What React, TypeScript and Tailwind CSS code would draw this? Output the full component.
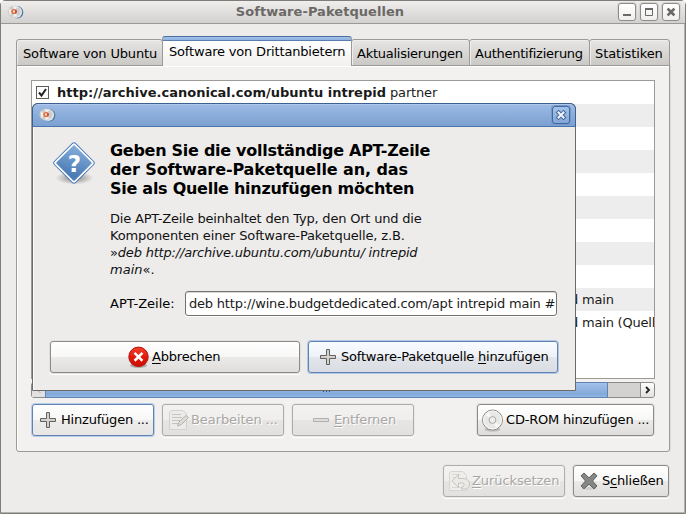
import React from "react";

type ButtonProps = {
  children: React.ReactNode;
  icon?: React.ReactNode;
  className?: string;
  tone?: "normal" | "default" | "focused" | "disabled";
};

const TONES = {
  normal:
    "border-[#8d8b87] bg-[linear-gradient(#ffffff,#f7f7f6_49%,#ebeae8_51%,#dfdedc)] text-black shadow-[0_0_0_1px_#e2e0de,0_1px_0_1px_#ffffff]",
  default:
    "border-[#5f83b3] bg-[linear-gradient(#ffffff,#f7f7f6_49%,#eeedec_51%,#e7e6e4)] text-black shadow-[0_0_0_1px_#b9cce6]",
  focused:
    "border-[#5f83b3] bg-[linear-gradient(#f8fbff,#eef1f6_49%,#e2e5ea_51%,#d9dde3)] text-black shadow-[0_0_0_1px_#b0c6e2]",
  disabled:
    "border-[#aeaca9] bg-[linear-gradient(#f3f2f1,#efeeed_49%,#e6e5e3_51%,#e2e1df)] text-[#a9a7a4] [text-shadow:1px_1px_0_#fff] shadow-[0_0_0_1px_#e9e8e6,0_1px_0_1px_#ffffff]",
};

function Button({ children, icon, className = "", tone = "normal" }: ButtonProps) {
  return (
    <button
      className={`flex h-8 shrink-0 items-center rounded-[3px] border tracking-[-0.2px] whitespace-pre ${TONES[tone]} ${className}`}
    >
      {icon}
      <span className="leading-4">{children}</span>
    </button>
  );
}

function Key({ children }: { children: React.ReactNode }) {
  return <span className="underline decoration-1 underline-offset-2">{children}</span>;
}

function PlusIcon() {
  return (
    <svg width="18" height="18" viewBox="0 0 18 18" className="shrink-0">
      <path
        d="M7.5 1.5h3v6h6v3h-6v6h-3v-6h-6v-3h6z"
        fill="#c9c8c4"
        stroke="#63615d"
      />
      <path d="M9 2.5v13M2.5 9h13" stroke="#dddcd9" />
    </svg>
  );
}

function MinusIcon() {
  return (
    <svg width="18" height="18" viewBox="0 0 18 18" className="shrink-0">
      <path d="M1.5 7.5h15v3h-15z" fill="#dddcda" stroke="#b1b0ad" />
    </svg>
  );
}

function EditIcon() {
  return (
    <svg width="22" height="22" viewBox="0 0 22 22" className="shrink-0" fill="none">
      <path d="M3 1.5h12l3.500 3.500v15.500H1.500V3z" fill="#ecebea" stroke="#d2d1ce" />
      <path d="M4 5.500h9M4 8.500h10M4 11.500h8M4 14.500h6" stroke="#c4c3c0" />
      <path d="m9.500 17 1.500-4 7-6.500 2.500 2-7 7z" fill="#dddcd8" stroke="#b4b3af" />
    </svg>
  );
}

function RevertIcon() {
  return (
    <svg width="24" height="24" viewBox="0 0 24 24" className="shrink-0" fill="none">
      <path d="M4 2.500h12l3.500 4v15h-17V4z" fill="#eeedeb" stroke="#d6d5d2" />
      <path d="M5 5.500h8M5 8.500h3M5 18.500h10" stroke="#d9d8d5" />
      <path
        d="m5 12 6.500-6.500v4h5c3.500 0 6 2.500 6 5.500s-2 5-5 5h-3v-2h1.500c1.500-1 1.500-3.500 0-4h-4.500v4.500z"
        fill="#ebeae5"
        stroke="#c6c5c0"
      />
    </svg>
  );
}

function CancelIcon() {
  return (
    <svg width="22" height="23" viewBox="0 0 22 23" className="shrink-0">
      <defs>
        <linearGradient id="red" x1="0" y1="0" x2="0" y2="1">
          <stop offset="0" stopColor="#f4412f" />
          <stop offset=".5" stopColor="#e01b0c" />
          <stop offset="1" stopColor="#d00b02" />
        </linearGradient>
      </defs>
      <ellipse cx="10.500" cy="19.500" rx="8.500" ry="2.500" fill="#8a8885" opacity=".6" />
      <circle cx="10.500" cy="10.800" r="9.700" fill="url(#red)" stroke="#b3100c" />
      <path
        d="m7.500 7.800 6 6m0-6-6 6"
        stroke="#fff"
        strokeWidth="2.600"
        strokeLinecap="square"
      />
    </svg>
  );
}

function DiscIcon() {
  return (
    <svg width="22" height="23" viewBox="0 0 22 23" className="shrink-0" fill="none">
      <ellipse cx="10.500" cy="20.500" rx="8" ry="2" fill="#a4a29f" opacity=".6" />
      <circle cx="10.500" cy="11" r="10" fill="#e8e8e7" stroke="#8f8e8b" />
      <circle cx="10.500" cy="11" r="8.900" stroke="#fafafa" />
      <path d="M10.500 11 4 6l3-3zM10.500 11l7 5-3 3z" fill="#f8f8f8" />
      <circle cx="10.500" cy="11" r="3.400" fill="#f4f4f3" stroke="#a5a4a1" />
      <circle cx="10.500" cy="11" r="1.300" fill="#fff" stroke="#d5d4d1" strokeWidth=".6" />
    </svg>
  );
}

function CloseIcon() {
  return (
    <svg width="20" height="20" viewBox="0 0 20 20" className="shrink-0">
      <ellipse cx="10" cy="17.500" rx="8" ry="1.500" fill="#cfcecc" />
      <path
        d="m5 2 5 4.800L15 2l3 2.800L13.500 10l4.500 5-3 2.800-5-4.600-5 4.600L2 15l4.500-5L2 4.800z"
        fill="#858785"
        stroke="#5f615d"
        strokeLinejoin="round"
      />
    </svg>
  );
}

function QuestionIcon() {
  return (
    <svg width="46" height="46" viewBox="0 0 46 46" className="shrink-0">
      <defs>
        <linearGradient id="ask" x1="0" y1="0" x2=".6" y2="1">
          <stop offset="0" stopColor="#86aedb" />
          <stop offset="1" stopColor="#4b7cb5" />
        </linearGradient>
        <radialGradient id="shade">
          <stop offset="0" stopColor="#85827f" />
          <stop offset="1" stopColor="#85827f" stopOpacity="0" />
        </radialGradient>
      </defs>
      <ellipse cx="21.500" cy="37" rx="19" ry="6.500" fill="url(#shade)" />
      <rect
        x="6"
        y="7"
        width="30"
        height="30"
        rx="2.500"
        transform="rotate(45 21 22)"
        fill="#fff"
        stroke="#4a78b3"
      />
      <rect
        x="8.200"
        y="9.200"
        width="25.600"
        height="25.600"
        rx="1"
        transform="rotate(45 21 22)"
        fill="url(#ask)"
      />
      <text
        x="21.500"
        y="30.500"
        textAnchor="middle"
        fill="#fff"
        fontFamily="DejaVu Sans, sans-serif"
        fontWeight="700"
        fontSize="23"
      >
        ?
      </text>
    </svg>
  );
}

function AppIcon() {
  return (
    <svg width="17" height="16" viewBox="0 0 17 16" className="shrink-0">
      <ellipse cx="10.500" cy="8.300" rx="5.800" ry="6.200" fill="#54779f" />
      <ellipse cx="9.300" cy="7.900" rx="5.800" ry="6" fill="#dde4eb" />
      <ellipse cx="7" cy="7.600" rx="6.500" ry="5.800" fill="#cfcdca" />
      <path d="m1.500 4 4 3.500-3 4zM6 2l1 4 4-3zM6 13l1-4 4 3z" fill="#f0efed" />
      <circle cx="7" cy="7.500" r="1.900" fill="#f7dccb" stroke="#e0683c" strokeWidth="1.300" />
      <path d="M4 7.500h1.500" stroke="#e07b36" strokeWidth="1.500" />
      <path d="M9 6v3" stroke="#b63f3c" strokeWidth="1.300" />
    </svg>
  );
}

function WindowButton({ children }: { children: React.ReactNode }) {
  return (
    <span className="flex size-[18px] items-center justify-center rounded-[3px] border border-[#8e8c89] bg-[linear-gradient(#ffffff,#f0efee)] shadow-[0_0_0_1px_#d5d3d1]">
      <svg width="10" height="10" viewBox="0 0 10 10" fill="none" stroke="#6b6966">
        {children}
      </svg>
    </span>
  );
}

function Tab({ label, className }: { label: string; className: string }) {
  return (
    <div
      className={`mt-[3px] flex h-[27px] items-center rounded-t-[3px] border border-[#9c9a97] bg-[linear-gradient(#e7e6e4,#cbc9c6)] pt-[3px] whitespace-pre shadow-[inset_1px_1px_0_#efeeed] ${className}`}
    >
      {label}
    </div>
  );
}

function Dialog() {
  return (
    <div className="absolute top-[103px] left-8 flex h-[288px] w-[544px] flex-col rounded-t-[6px] border border-[#6d6b68] bg-[#edeceb] text-black shadow-[inset_1px_0_0_#fbfbfb]">
      <div className="-mx-px -mt-px flex h-6 shrink-0 items-center justify-between rounded-t-[6px] border border-[#3d618f] border-b-[#4a76ad] bg-[linear-gradient(#9dbbe5,#7ba0d0)] pr-[5px] pl-[6px] shadow-[inset_0_1px_0_#afc8eb]">
        <AppIcon />
        <span className="flex size-[18px] items-center justify-center rounded-[3px] border border-[#4169a0] bg-[linear-gradient(#a5c2e9,#83a7d7)] shadow-[0_0_0_1px_#7799c6]">
          <svg width="12" height="12" viewBox="0 0 12 12">
            <path
              d="m3.500 3.500 5 5m0-5-5 5"
              stroke="#41679a"
              strokeWidth="4"
              strokeLinecap="square"
            />
            <path
              d="m3.500 3.500 5 5m0-5-5 5"
              stroke="#f4f8fe"
              strokeWidth="2"
              strokeLinecap="square"
            />
          </svg>
        </span>
      </div>
      <div className="flex pt-[14px] pl-5">
        <QuestionIcon />
        <div className="ml-[11px] whitespace-pre">
          <h1 className="text-[16px] leading-[19px] font-bold">
            <div className="tracking-[-0.28px]">Geben Sie die vollständige APT-Zeile</div>
            <div className="tracking-[-0.11px]">der Software-Paketquelle an, das</div>
            <div className="tracking-[-0.27px]">Sie als Quelle hinzufügen möchten</div>
          </h1>
          <div className="mt-3 leading-[17px] text-[#111]">
            <div className="tracking-[-0.2px]">
              Die APT-Zeile beinhaltet den Typ, den Ort und die
            </div>
            <div className="tracking-[-0.15px]">
              Komponenten einer Software-Paketquelle, z.B.
            </div>
            <div className="tracking-[-0.19px]">
              »<i>deb http://archive.ubuntu.com/ubuntu/ intrepid</i>
            </div>
            <div>
              <i>main</i>«.
            </div>
          </div>
          <div className="mt-[13px] flex h-[25px] items-center">
            <span className="w-[75px]">APT-Zeile:</span>
            <div className="flex h-[25px] w-[372px] items-center overflow-hidden rounded-[3px] border border-[#73716e] bg-white pl-[3px] tracking-[-0.2px] text-[#1a1a1a] shadow-[inset_0_1px_0_#d9d8d6,0_1px_0_#fff]">
              deb http://wine.budgetdedicated.com/apt intrepid main #
            </div>
          </div>
        </div>
      </div>
      <div className="mt-[25px] flex gap-2 pl-[17px]">
        <Button className="w-[250px] pl-[77px]" icon={<CancelIcon />}>
          <span className="ml-[2px]">
            <Key>A</Key>bbrechen
          </span>
        </Button>
        <Button tone="focused" className="w-[250px] pl-[10px]" icon={<PlusIcon />}>
          <span className="ml-[4px]">
            Software-Paketquelle <Key>h</Key>inzufügen
          </span>
        </Button>
      </div>
    </div>
  );
}

const ROWS = Array.from({ length: 13 }, (_, i) => i);

export default function App() {
  return (
    <div className="relative h-[516px] w-[686px] overflow-hidden bg-white font-['DejaVu_Sans',sans-serif] text-[13px] leading-4 text-black">
      <div className="flex h-[514px] flex-col rounded-t-[5px] border border-[#7f7d7a] bg-[#edeceb] shadow-[inset_-1px_-1px_0_#b4b2af]">
        <div className="flex h-[23px] shrink-0 items-center border-b border-[#9b9996] bg-[linear-gradient(#efeeed,#d2d1cf)] pr-[5px] pl-[6px]">
          <AppIcon />
          <div className="flex-1 pr-[2px] text-center font-bold tracking-[0.05px] text-[#6b6966]">
            Software-Paketquellen
          </div>
          <div className="flex gap-1">
            <WindowButton>
              <path d="M1 8h8" strokeWidth="2" />
            </WindowButton>
            <WindowButton>
              <path d="M1.500 2v6.500h7V2" />
              <path d="M1 2h8" strokeWidth="2" />
            </WindowButton>
            <WindowButton>
              <path d="m2.500 2.500 5 5m0-5-5 5" strokeWidth="2.600" strokeLinecap="square" />
            </WindowButton>
          </div>
        </div>

        <div className="px-[15px] pt-3">
          <div className="relative z-10 -mb-px flex">
            <Tab label="Software von Ubuntu" className="w-[147px] pl-[6px] tracking-[-0.16px]" />
            <div className="-ml-px h-[30px] w-[190px] rounded-t-[3px] border-x border-t border-x-[#9c9a97] border-t-[#4b6f9f] bg-[linear-gradient(#a3c1ea_0,#8fb2e1_3px,#5a7eae_3px,#5a7eae_4px,#ffffff_4px,#f2f1f0_28px)] pt-[7px] pl-[6px] tracking-[-0.18px] whitespace-pre">
              Software von Drittanbietern
            </div>
            <Tab label="Aktualisierungen" className="-ml-px w-[119px] pl-[5px] tracking-[-0.25px]" />
            <Tab label="Authentifizierung" className="-ml-px w-[121px] pl-[5px] tracking-[-0.25px]" />
            <Tab label="Statistiken" className="-ml-px w-[81px] pl-[5px] tracking-[-0.1px]" />
          </div>

          <div className="h-[387px] w-[654px] rounded-b-[3px] border border-[#9c9a97] bg-[#f2f1f0] pt-[14px] pl-[14px] shadow-[inset_1px_1px_0_#fff,1px_0_0_#dddbd9]">
            <div className="h-[299px] w-[624px] overflow-hidden border border-[#9c9a97] bg-white">
              {ROWS.map((i) => (
                <div
                  key={i}
                  className={`flex h-[23px] items-center whitespace-pre ${i % 2 === 1 && i < 10 ? "bg-[#ededed]" : "bg-white"}`}
                >
                  {i === 0 && (
                    <>
                      <span className="ml-1 flex size-[13px] items-center justify-center border border-[#5f5d5a] bg-white">
                        <svg width="11" height="11" viewBox="0 0 11 11">
                          <path
                            d="m2 5.500 2.500 3L9 2"
                            fill="none"
                            stroke="#222"
                            strokeWidth="2"
                          />
                        </svg>
                      </span>
                      <span className="ml-2 text-[#1a1a1a]">
                        <b>http://archive.canonical.com/ubuntu intrepid</b>
                        <span className="tracking-[-0.15px]"> partner</span>
                      </span>
                    </>
                  )}
                  {i === 9 && (
                    <span className="ml-[538px] tracking-[-0.2px] text-[#1a1a1a]">d main</span>
                  )}
                  {i === 10 && (
                    <span className="ml-[538px] tracking-[-0.2px] text-[#1a1a1a]">
                      d main (Quell
                    </span>
                  )}
                </div>
              ))}
            </div>

            <div className="mt-[3px] flex h-4 w-[624px] rounded-[3px] border border-[#8d8b87] bg-[#d3d2d0]">
              <div className="flex w-[13px] items-center justify-center bg-[#e2e1df]">
                <svg width="8" height="8" viewBox="0 0 8 8" fill="none" stroke="#aaa">
                  <path d="M5.500 1 2.500 4l3 3" />
                </svg>
              </div>
              <div className="-my-px flex w-[563px] items-center justify-center border border-[#5f83b3] bg-[linear-gradient(#a3c1ea,#83a9da_80%,#94b6e4)]">
                <span className="mt-[2px] flex gap-[2px]">
                  <i className="size-px bg-[#33547f]" />
                  <i className="size-px bg-[#33547f]" />
                  <i className="size-px bg-[#33547f]" />
                </span>
              </div>
              <div className="flex-1" />
              <div className="flex w-[14px] items-center justify-center rounded-r-[2px] border-l border-[#8d8b87] bg-[linear-gradient(#fff,#e2e1df)]">
                <svg
                  width="8"
                  height="8"
                  viewBox="0 0 8 8"
                  fill="none"
                  stroke="#222"
                  strokeWidth="1.800"
                >
                  <path d="m2 1 3 3-3 3" />
                </svg>
              </div>
            </div>

            <div className="mt-[6px] ml-px flex w-[622px] gap-2">
              <Button tone="default" className="w-[122px] pl-[6px]" icon={<PlusIcon />}>
                <span className="ml-[4px]">Hinzufügen ...</span>
              </Button>
              <Button tone="disabled" className="w-[122px] pl-[5px]" icon={<EditIcon />}>
                <span className="ml-px tracking-[-0.08px]">Bearbeiten ...</span>
              </Button>
              <Button tone="disabled" className="w-[122px] pl-[19px]" icon={<MinusIcon />}>
                <span className="ml-[4px]">
                  <Key>E</Key>ntfernen
                </span>
              </Button>
              <Button className="ml-auto w-[177px] pl-1" icon={<DiscIcon />}>
                <span className="ml-[2px]">CD-ROM hinzufügen ...</span>
              </Button>
            </div>
          </div>

          <div className="mt-[13px] flex w-[654px] justify-end gap-2 pr-px">
            <Button tone="disabled" className="w-[122px] pl-[3px]" icon={<RevertIcon />}>
              <span className="ml-px tracking-[-0.08px]">
                <Key>Z</Key>urücksetzen
              </span>
            </Button>
            <Button className="w-[96px] pl-[5px]" icon={<CloseIcon />}>
              <span className="ml-[3px]">
                S<Key>c</Key>hließen
              </span>
            </Button>
          </div>
        </div>
      </div>
      <Dialog />
    </div>
  );
}
